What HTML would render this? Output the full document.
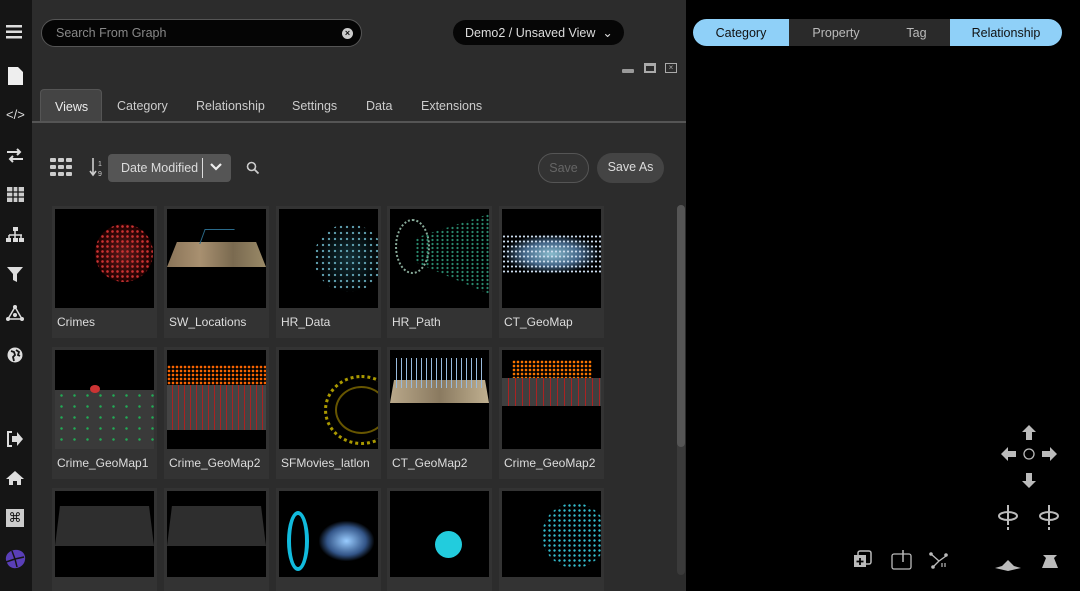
<!DOCTYPE html>
<html><head><meta charset="utf-8"><style>
*{margin:0;padding:0;box-sizing:border-box}
html{width:1080px;height:591px;overflow:hidden}
body{width:1080px;height:591px;background:#000;font-family:"Liberation Sans",sans-serif;position:relative;overflow:hidden;color:#ddd}
.abs{position:absolute}
#side{left:0;top:0;width:32px;height:591px;background:#151515}
#panel{left:32px;top:0;width:654px;height:591px;background:#2c2c2c}
.search{left:41px;top:19px;width:321px;height:28px;border:1px solid #555;border-radius:14px;background:#050505;color:#888;font-size:12.5px;padding:6px 0 0 14px}
.demo{left:453px;top:20px;width:171px;height:25px;border-radius:13px;background:#060606;color:#ddd;font-size:12.5px;padding:5px 0 0 12px}
.tabs span{position:absolute;top:99px;font-size:12.5px;color:#ccc}
.tabline{left:32px;top:121px;width:654px;height:2px;background:#555}
.views{left:40px;top:89px;width:62px;height:34px;background:#444;border:1px solid #555;border-bottom:none;border-radius:4px 4px 0 0;color:#eee;font-size:12.5px;padding:10px 0 0 14px}
.card{position:absolute;width:105px;height:132px;background:#333}
.card .im{position:absolute;left:3px;top:3px;width:99px;height:99px;background:#000;overflow:hidden}
.card .lb{position:absolute;left:5px;top:109px;font-size:12px;color:#ddd;white-space:nowrap;width:97px;overflow:hidden}
.r3{height:103px}
.rt{position:absolute;top:19px;height:27px;font-size:12.5px;text-align:center;padding-top:7px}
</style></head><body>
<div id="side" class="abs"></div>
<svg class="abs" style="left:6px;top:24px" width="18" height="16"><rect y="1" width="16" height="2.5" fill="#ddd"/><rect y="6.5" width="16" height="2.5" fill="#ddd"/><rect y="12" width="16" height="2.5" fill="#ddd"/></svg>
<svg class="abs" style="left:8px;top:67px" width="16" height="18"><path d="M0 0h10l5 5v13H0z" fill="#eee"/></svg>
<div class="abs" style="left:6px;top:107px;font-size:13px;color:#ddd">&lt;/&gt;</div>
<svg class="abs" style="left:6px;top:148px" width="18" height="16"><path d="M1 4h13M11 1l3 3-3 3M17 11H4M7 8l-3 3 3 3" stroke="#ddd" stroke-width="2" fill="none"/></svg>
<svg class="abs" style="left:7px;top:187px" width="17" height="15"><rect width="17" height="15" fill="#ccc"/><path d="M0 5h17M0 10h17M6 0v15M11 0v15" stroke="#151515" stroke-width="1.3"/></svg>
<svg class="abs" style="left:6px;top:227px" width="18" height="16"><rect x="7" y="0" width="5" height="4" fill="#ddd"/><path d="M9 4v4M3 8h13M3 8v3M9 8v3M15 8v3" stroke="#ddd" stroke-width="1.5"/><rect x="0" y="11" width="5" height="4" fill="#ddd"/><rect x="7" y="11" width="5" height="4" fill="#ddd"/><rect x="13" y="11" width="5" height="4" fill="#ddd"/></svg>
<svg class="abs" style="left:7px;top:267px" width="16" height="16"><path d="M0 0h16l-6 7v8l-4-2V7z" fill="#ddd"/></svg>
<svg class="abs" style="left:6px;top:305px" width="18" height="16"><path d="M9 2L2 14h14z" stroke="#ddd" stroke-width="1.5" fill="none"/><circle cx="9" cy="2" r="2" fill="#ddd"/><circle cx="2" cy="14" r="2" fill="#ddd"/><circle cx="16" cy="14" r="2" fill="#ddd"/><circle cx="9" cy="10" r="2" fill="#ddd"/></svg>
<svg class="abs" style="left:7px;top:347px" width="16" height="16"><circle cx="8" cy="8" r="7.5" fill="#ddd"/><path d="M4 4l3 1 1 3-2 2 1 4M9 3l3 2-1 3 2 1" stroke="#151515" stroke-width="1.8" fill="none"/></svg>
<svg class="abs" style="left:6px;top:431px" width="18" height="16"><path d="M6 1H2v14h4" stroke="#ddd" stroke-width="2" fill="none"/><path d="M6 5h5V1l6 7-6 7v-4H6z" fill="#ddd"/></svg>
<svg class="abs" style="left:6px;top:470px" width="18" height="16"><path d="M9 1L0 9h3v6h4v-4h4v4h4V9h3z" fill="#ddd"/></svg>
<div class="abs" style="left:6px;top:509px;width:18px;height:18px;background:#ccc;color:#151515;font-size:13px;text-align:center;line-height:18px">⌘</div>
<svg class="abs" style="left:3px;top:548px" width="24" height="22"><path d="M3 12C2 5 9 1 15 2c5 1 8 5 7 10-1 6-7 9-12 8C6 19 4 16 3 12z" fill="#5a3fb8"/><path d="M9 3l3 8-9 3M12 11l9-2M12 11l2 8" stroke="#151515" stroke-width="1.5" fill="none"/></svg>

<div id="panel" class="abs"></div>
<div class="abs search">Search From Graph</div>
<div class="abs" style="left:342px;top:28px;width:11px;height:11px;border-radius:50%;background:#ccc;color:#111;font-size:9px;line-height:11px;text-align:center;font-weight:bold">×</div>
<div class="abs demo">Demo2 / Unsaved View &nbsp;⌄</div>
<div class="abs" style="left:622px;top:69px;width:12px;height:4px;background:#999;border-radius:1px"></div>
<div class="abs" style="left:644px;top:63px;width:12px;height:10px;border:2px solid #aaa;border-top-width:3px"></div>
<div class="abs" style="left:665px;top:63px;width:12px;height:10px;border:1.5px solid #aaa;font-size:8px;line-height:7px;text-align:center;color:#aaa">×</div>
<div class="abs views">Views</div>
<div class="tabs"><span style="left:117px">Category</span><span style="left:196px">Relationship</span><span style="left:292px">Settings</span><span style="left:366px">Data</span><span style="left:421px">Extensions</span></div>
<div class="abs tabline"></div>
<svg class="abs" style="left:50px;top:158px" width="22" height="18"><g fill="#ccc"><rect x="0" y="0" width="6" height="4" rx="1"/><rect x="8" y="0" width="6" height="4" rx="1"/><rect x="16" y="0" width="6" height="4" rx="1"/><rect x="0" y="7" width="6" height="4" rx="1"/><rect x="8" y="7" width="6" height="4" rx="1"/><rect x="16" y="7" width="6" height="4" rx="1"/><rect x="0" y="14" width="6" height="4" rx="1"/><rect x="8" y="14" width="6" height="4" rx="1"/><rect x="16" y="14" width="6" height="4" rx="1"/></g></svg>
<svg class="abs" style="left:89px;top:158px" width="16" height="20"><path d="M4 0v16M1 13l3 4 3-4" stroke="#ccc" stroke-width="1.6" fill="none"/><text x="9" y="8" font-size="7" fill="#ccc" font-family="Liberation Sans">1</text><text x="9" y="18" font-size="7" fill="#ccc" font-family="Liberation Sans">9</text></svg>
<div class="abs" style="left:108px;top:154px;width:123px;height:28px;background:#555;border-radius:4px;font-size:12.5px;color:#ddd;padding:7px 0 0 13px">Date Modified</div>
<div class="abs" style="left:202px;top:158px;width:1px;height:20px;background:#ddd"></div>
<svg class="abs" style="left:210px;top:162px" width="12" height="10"><path d="M1 2l5 5 5-5" stroke="#eee" stroke-width="2.2" fill="none"/></svg>
<svg class="abs" style="left:246px;top:161px" width="14" height="14"><circle cx="5.5" cy="5.5" r="4" stroke="#ccc" stroke-width="1.6" fill="none"/><path d="M8.5 8.5l4 4" stroke="#ccc" stroke-width="1.8"/></svg>
<div class="abs" style="left:538px;top:153px;width:51px;height:30px;border:1px solid #555;border-radius:15px;color:#666;font-size:12.5px;text-align:center;padding-top:7px;background:#333">Save</div>
<div class="abs" style="left:597px;top:153px;width:67px;height:30px;border-radius:15px;background:#444;color:#ddd;font-size:12.5px;text-align:center;padding-top:7px">Save As</div>
<div class="abs" style="left:677px;top:205px;width:8px;height:370px;background:#3a3a3a;border-radius:4px"></div>
<div class="abs" style="left:677px;top:205px;width:8px;height:242px;background:#555;border-radius:4px"></div>

<div class="card" style="left:52px;top:206px"><div class="im"><div class="abs" style="left:40px;top:15px;width:58px;height:58px;border-radius:50%;background:radial-gradient(circle,#c33 1px,transparent 1.6px) 0 0/5px 5px, radial-gradient(circle,#5a1a1a,#200 70%)"></div></div><div class="lb">Crimes</div></div>
<div class="card" style="left:164px;top:206px"><div class="im"><div class="abs" style="left:0;top:33px;width:99px;height:25px;background:linear-gradient(90deg,#8a7458,#a89070,#7a6a50,#9a8a68);clip-path:polygon(10% 0,90% 0,100% 100%,0 100%)"></div><div class="abs" style="left:35px;top:20px;width:30px;height:15px;border-top:1px solid #2a6a8a;border-left:1px solid #2a6a8a;transform:skewX(-20deg)"></div></div><div class="lb">SW_Locations</div></div>
<div class="card" style="left:276px;top:206px"><div class="im"><div class="abs" style="left:35px;top:15px;width:70px;height:68px;border-radius:50%;background:radial-gradient(circle,#6ab 0.8px,transparent 1.4px) 0 0/6px 6px,radial-gradient(circle,#123038,#000 70%)"></div></div><div class="lb">HR_Data</div></div>
<div class="card" style="left:387px;top:206px"><div class="im"><div class="abs" style="left:5px;top:10px;width:35px;height:55px;border-radius:50%;border:2px dotted #8a9"></div><div class="abs" style="left:25px;top:5px;width:74px;height:80px;background:radial-gradient(circle,#3a8 0.8px,transparent 1.4px) 0 0/5px 4px;opacity:.8;clip-path:polygon(0 30%,100% 0,100% 100%,0 60%)"></div></div><div class="lb">HR_Path</div></div>
<div class="card" style="left:499px;top:206px"><div class="im"><div class="abs" style="left:0;top:25px;width:99px;height:40px;background:radial-gradient(ellipse,#8bc 0%,#468 40%,transparent 70%)"></div><div class="abs" style="left:0;top:25px;width:99px;height:40px;background:radial-gradient(circle,#cde 0.8px,transparent 1.3px) 0 0/4px 5px"></div></div><div class="lb">CT_GeoMap</div></div>

<div class="card" style="left:52px;top:347px"><div class="im"><div class="abs" style="left:0;top:40px;width:99px;height:59px;background:#3a3a3a;background-image:radial-gradient(circle,#2a5 1px,transparent 1.5px);background-size:13px 11px"></div><div class="abs" style="left:35px;top:35px;width:10px;height:8px;background:#c33;border-radius:50%"></div></div><div class="lb">Crime_GeoMap1</div></div>
<div class="card" style="left:164px;top:347px"><div class="im"><div class="abs" style="left:0;top:15px;width:99px;height:20px;background:radial-gradient(circle,#f60 1px,transparent 1.6px) 0 0/4px 4px"></div><div class="abs" style="left:0;top:35px;width:99px;height:45px;background:#444;background-image:repeating-linear-gradient(90deg,transparent 0 5px,#a22 5px 6px)"></div></div><div class="lb">Crime_GeoMap2</div></div>
<div class="card" style="left:276px;top:347px"><div class="im"><div class="abs" style="left:45px;top:25px;width:75px;height:70px;border-radius:50%;border:3px dotted #a90;box-shadow:inset 0 0 0 8px #000,inset 0 0 0 10px #650"></div></div><div class="lb">SFMovies_latlon</div></div>
<div class="card" style="left:387px;top:347px"><div class="im"><div class="abs" style="left:0;top:30px;width:99px;height:23px;background:linear-gradient(90deg,#b9a88a,#8a7a60,#c0b090);clip-path:polygon(4% 0,96% 0,100% 100%,0 100%)"></div><div class="abs" style="left:6px;top:8px;width:88px;height:30px;background:repeating-linear-gradient(90deg,#9bd 0 1px,transparent 1px 5px)"></div></div><div class="lb">CT_GeoMap2</div></div>
<div class="card" style="left:499px;top:347px"><div class="im"><div class="abs" style="left:10px;top:10px;width:80px;height:20px;background:radial-gradient(circle,#f70 1px,transparent 1.6px) 0 0/4px 4px"></div><div class="abs" style="left:0;top:28px;width:99px;height:28px;background:#3f3f3f;background-image:repeating-linear-gradient(90deg,transparent 0 6px,#a22 6px 7px)"></div></div><div class="lb">Crime_GeoMap2</div></div>

<div class="card r3" style="left:52px;top:488px"><div class="im" style="height:86px"><div class="abs" style="left:0;top:15px;width:99px;height:40px;background:#2e2e2e;clip-path:polygon(5% 0,95% 0,100% 100%,0 100%)"></div></div></div>
<div class="card r3" style="left:164px;top:488px"><div class="im" style="height:86px"><div class="abs" style="left:0;top:15px;width:99px;height:40px;background:#2e2e2e;clip-path:polygon(5% 0,95% 0,100% 100%,0 100%)"></div></div></div>
<div class="card r3" style="left:276px;top:488px"><div class="im" style="height:86px"><div class="abs" style="left:8px;top:20px;width:22px;height:60px;border-radius:50%;border:4px solid #1bd"></div><div class="abs" style="left:40px;top:30px;width:55px;height:40px;background:radial-gradient(ellipse,#9cf,#358 50%,transparent 72%)"></div></div></div>
<div class="card r3" style="left:387px;top:488px"><div class="im" style="height:86px"><div class="abs" style="left:45px;top:40px;width:27px;height:27px;border-radius:50%;background:#2cd"></div></div></div>
<div class="card r3" style="left:499px;top:488px"><div class="im" style="height:86px"><div class="abs" style="left:40px;top:12px;width:65px;height:65px;border-radius:50%;background:radial-gradient(circle,#3bc 0.9px,transparent 1.5px) 0 0/5px 5px"></div></div></div>

<div class="rt" style="left:693px;width:96px;background:#8fd0f8;color:#111;border-radius:14px 0 0 14px">Category</div>
<div class="rt" style="left:789px;width:94px;background:#2a2a2a;color:#bbb">Property</div>
<div class="rt" style="left:883px;width:67px;background:#2a2a2a;color:#bbb">Tag</div>
<div class="rt" style="left:950px;width:112px;background:#8fd0f8;color:#111;border-radius:0 14px 14px 0">Relationship</div>

<svg class="abs" style="left:995px;top:420px" width="70" height="160">
<g fill="#bbb">
<path d="M34 5l-7 7h4v8h6v-8h4z"/>
<path d="M34 68l-7-7h4v-8h6v8h4z"/>
<path d="M6 34l7-7v4h8v6h-8v4z"/>
<path d="M62 34l-7-7v4h-8v6h8v4z"/>
<path d="M7 146l6-6 6 6 7 2-13 3-13-3z"/>
<path d="M48 135h14l-3 3 4 10H47l4-10z"/>
</g>
<circle cx="34" cy="34" r="5" stroke="#bbb" stroke-width="1.3" fill="none"/>
<g stroke="#bbb" stroke-width="2" fill="none">
<ellipse cx="13" cy="96" rx="9" ry="4"/><path d="M13 85v20M13 107v3"/>
<ellipse cx="54" cy="96" rx="9" ry="4"/><path d="M54 85v20M54 107v3"/>
</g>
</svg>
<svg class="abs" style="left:853px;top:550px" width="100" height="22">
<rect x="5" y="1" width="13" height="13" rx="2" stroke="#bbb" stroke-width="1.5" fill="none"/>
<rect x="1" y="5" width="12" height="12" fill="#bbb"/><path d="M7 8v7M3.5 11.5h7" stroke="#000" stroke-width="1.8"/>
<rect x="39" y="4" width="19" height="15" rx="2" stroke="#bbb" stroke-width="1.3" fill="none"/><path d="M50 0v12" stroke="#bbb" stroke-width="1.5"/>
<path d="M78 4l8 7 7-5M86 11l-6 6" stroke="#bbb" stroke-width="1.3" fill="none"/><circle cx="78" cy="4" r="1.8" fill="#bbb"/><circle cx="93" cy="5" r="1.8" fill="#bbb"/><circle cx="80" cy="17" r="1.8" fill="#bbb"/><path d="M89 13v4M92 13v4" stroke="#bbb" stroke-width="1.2"/>
</svg>
</body></html>
